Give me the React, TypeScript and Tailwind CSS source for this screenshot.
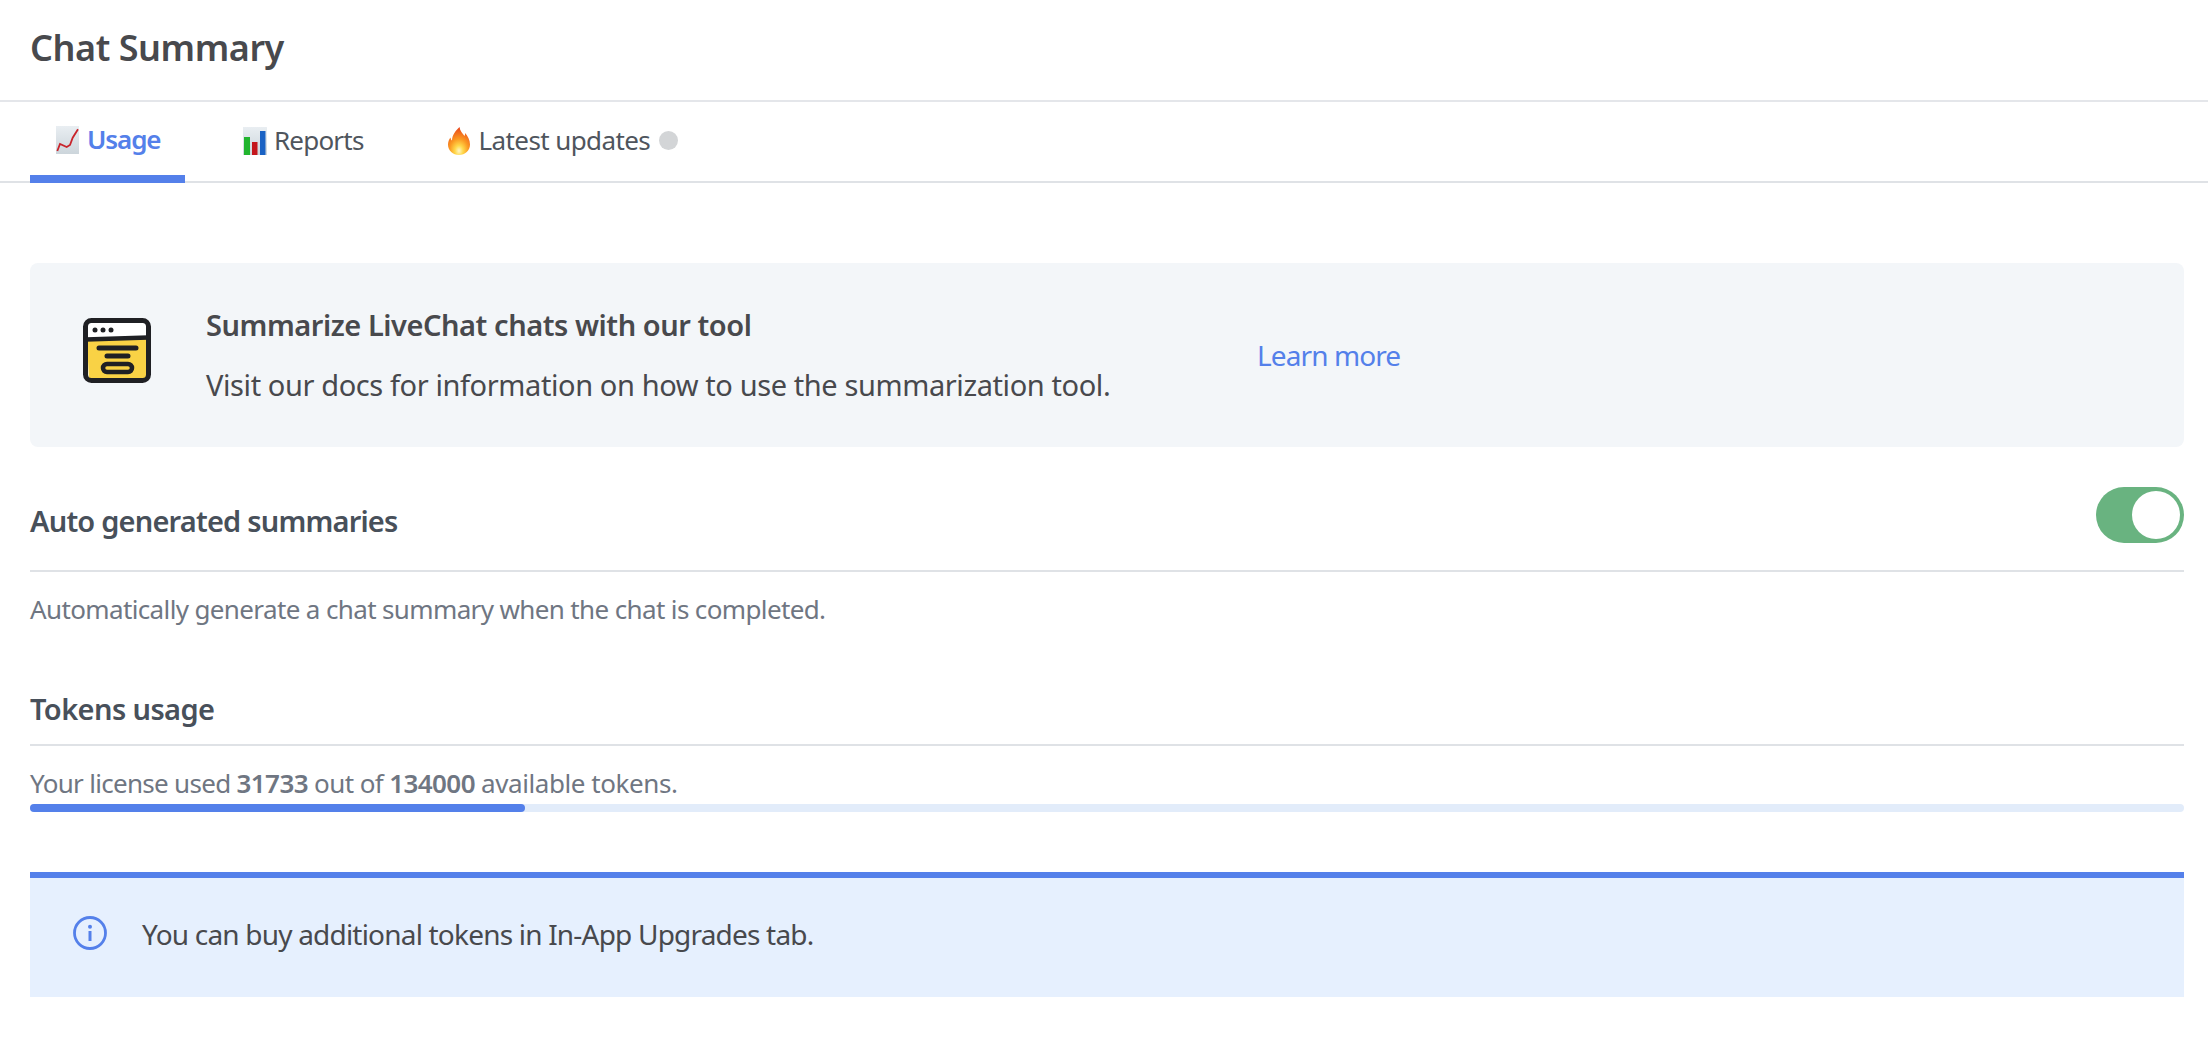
import React from 'react';

const font = { fontFamily: '"Noto Sans", "Liberation Sans", sans-serif' };

const ChartUp = () => (
  <svg width="23" height="28" viewBox="0 0 23 28" className="shrink-0">
    <defs>
      <linearGradient id="chartBg" x1="0" y1="0" x2="0" y2="1">
        <stop offset="0" stopColor="#e9eef2" />
        <stop offset="1" stopColor="#ccd5db" />
      </linearGradient>
    </defs>
    <rect width="23" height="28" fill="url(#chartBg)" />
    <path d="M1.300 25 4 18 10.700 21 14 19 16.700 11.700 22 3.300" fill="none" stroke="#c9242b" strokeWidth="1.800" />
  </svg>
);

const BarChart = () => (
  <svg width="24" height="28" viewBox="0 0 24 28" className="shrink-0">
    <defs>
      <linearGradient id="barsBg" x1="0" y1="0" x2="0" y2="1">
        <stop offset="0" stopColor="#e9eef2" />
        <stop offset="1" stopColor="#ccd5db" />
      </linearGradient>
    </defs>
    <rect width="24" height="28" fill="url(#barsBg)" />
    <rect x="1" y="10" width="6" height="18" fill="#22b52f" />
    <rect x="9" y="15" width="5.500" height="13" fill="#c4161c" />
    <rect x="17" y="4" width="5.500" height="24" fill="#1a62c4" />
  </svg>
);

const Fire = () => (
  <svg width="22" height="28" viewBox="0 0 22 28" className="shrink-0">
    <defs>
      <radialGradient id="flame" cx="0.5" cy="0.85" r="0.85">
        <stop offset="0" stopColor="#fff6c8" />
        <stop offset="0.22" stopColor="#ffd84a" />
        <stop offset="0.5" stopColor="#fb9a22" />
        <stop offset="1" stopColor="#e8431c" />
      </radialGradient>
    </defs>
    <path d="M11.500 0c.5 4 3 6 5 9 .5-1 .7-2 .7-3 2.500 3 4.800 7 4.800 11.500C22 23.500 17 28 11 28S0 23.500 0 17.500C0 15 1 12.500 2.500 10.500c.2 1.500.7 2.500 1.500 3C4 8.500 7.500 3.500 11.500 0Z" fill="url(#flame)" />
  </svg>
);

const DocIcon = () => (
  <svg width="68" height="65" viewBox="0 0 68 65" className="shrink-0 mb-[10px]">
    <path d="M4 23 63 21v38a3 3 0 0 1-3 3H6Z" fill="#f9d245" />
    <path d="M5 5h58v15H5Z" fill="#fff" />
    <rect x="2.500" y="2.500" width="63" height="60" rx="6" fill="none" stroke="#1f2024" strokeWidth="5" />
    <path d="M3 21.500 65 19.500" stroke="#1f2024" strokeWidth="4.500" />
    <circle cx="12" cy="12" r="2.500" fill="#1f2024" />
    <circle cx="20" cy="12" r="2.500" fill="#1f2024" />
    <circle cx="28" cy="12" r="2.500" fill="#1f2024" />
    <path d="M16 30h37M24 38h21" stroke="#1f2024" strokeWidth="5" strokeLinecap="round" />
    <rect x="20" y="46" width="29" height="8" rx="4" fill="none" stroke="#1f2024" strokeWidth="4.500" />
  </svg>
);

const InfoIcon = () => (
  <svg width="34" height="34" viewBox="0 0 34 34" className="shrink-0 mb-[10px]">
    <circle cx="17" cy="17" r="15.500" fill="none" stroke="#5480ea" strokeWidth="2.800" />
    <circle cx="17" cy="10.700" r="2" fill="#5480ea" />
    <rect x="15.500" y="15" width="3" height="10" fill="#5480ea" />
  </svg>
);

const App: React.FC = () => {
  return (
    <div className="w-[2208px] h-[1040px] bg-white overflow-hidden" style={font}>
      {/* Header */}
      <header className="h-[102px] pl-[30px] flex items-center border-b-2 border-[#e4e6ea]">
        <h1 className="text-[36px] font-semibold text-[#48494d] tracking-[-0.45px] pb-[4px]">Chat Summary</h1>
      </header>

      {/* Tabs */}
      <nav className="h-[81px] pl-[30px] flex border-b-2 border-[#dfe2e6]">
        <div className="w-[155px] h-[81px] pl-[26px] flex items-center gap-[8px] border-b-[8px] border-[#5480ea] text-[#5480ea] font-semibold text-[26px] tracking-[-1.1px] pt-[2px]">
          <ChartUp />
          <span>Usage</span>
        </div>
        <div className="ml-[58px] flex items-center gap-[7px] text-[#4f555d] text-[26px] tracking-[-0.8px] pb-[4px] h-[81px]">
          <BarChart />
          <span>Reports</span>
        </div>
        <div className="ml-[84px] flex items-center gap-[9px] text-[#4f555d] text-[26px] tracking-[-0.6px] pb-[4px] h-[81px]">
          <Fire />
          <span>Latest updates</span>
          <span className="w-[19px] h-[19px] rounded-full bg-[#d3d5d7]" />
        </div>
      </nav>

      <main className="pl-[30px] pr-[24px] pt-[80px]">
        {/* Banner */}
        <section className="h-[184px] bg-[#f3f6f9] rounded-[8px] flex items-center pl-[53px]">
          <DocIcon />
          <div className="ml-[55px] w-[1051px]">
            <h2 className="text-[29px] font-semibold text-[#48494d] tracking-[-0.45px] leading-[40px]">Summarize LiveChat chats with our tool</h2>
            <p className="mt-[20px] text-[29px] text-[#48494d] tracking-[-0.4px] leading-[40px]">Visit our docs for information on how to use the summarization tool.</p>
          </div>
          <a className="text-[28px] text-[#5480ea] tracking-[-0.9px]">Learn more</a>
        </section>

        {/* Auto summaries */}
        <div className="mt-[40px] h-[85px] flex items-start justify-between border-b-2 border-[#dfe2e6]">
          <h3 className="mt-[14px] text-[29px] leading-[40px] font-semibold text-[#48505a] tracking-[-0.8px]">Auto generated summaries</h3>
          <div className="w-[88px] h-[56px] rounded-full bg-[#69b380] flex items-center justify-end pr-[4px]">
            <div className="w-[48px] h-[48px] rounded-full bg-white" />
          </div>
        </div>
        <p className="mt-[18px] text-[26px] leading-[38px] text-[#6f7682] tracking-[-0.63px]">Automatically generate a chat summary when the chat is completed.</p>

        {/* Tokens */}
        <div className="mt-[61px] h-[57px] flex items-start border-b-2 border-[#dfe2e6]">
          <h3 className="text-[29px] leading-[40px] font-semibold text-[#48505a] tracking-[-0.6px]">Tokens usage</h3>
        </div>
        <p className="mt-[18px] h-[40px] text-[26px] leading-[38px] text-[#6f7682] tracking-[-0.6px]">
          <span className="tracking-[-0.7px]">Your license used </span><b className="font-semibold">31733</b> out of <b className="font-semibold">134000</b> <span className="tracking-[-0.43px]">available tokens.</span>
        </p>
        <div className="h-[8px] rounded-full bg-[#e2ecfa]">
          <div className="h-[8px] w-[495px] rounded-full bg-[#5480ea]" />
        </div>

        {/* Info */}
        <div className="mt-[60px] h-[125px] bg-[#e6f0fe] border-t-[6px] border-[#5480ea] flex items-center pl-[43px]">
          <InfoIcon />
          <span className="ml-[35px] text-[28px] text-[#48494d] tracking-[-0.8px] pb-[8px]">You can buy additional tokens in In-App Upgrades tab.</span>
        </div>
      </main>
    </div>
  );
};

export default App;
